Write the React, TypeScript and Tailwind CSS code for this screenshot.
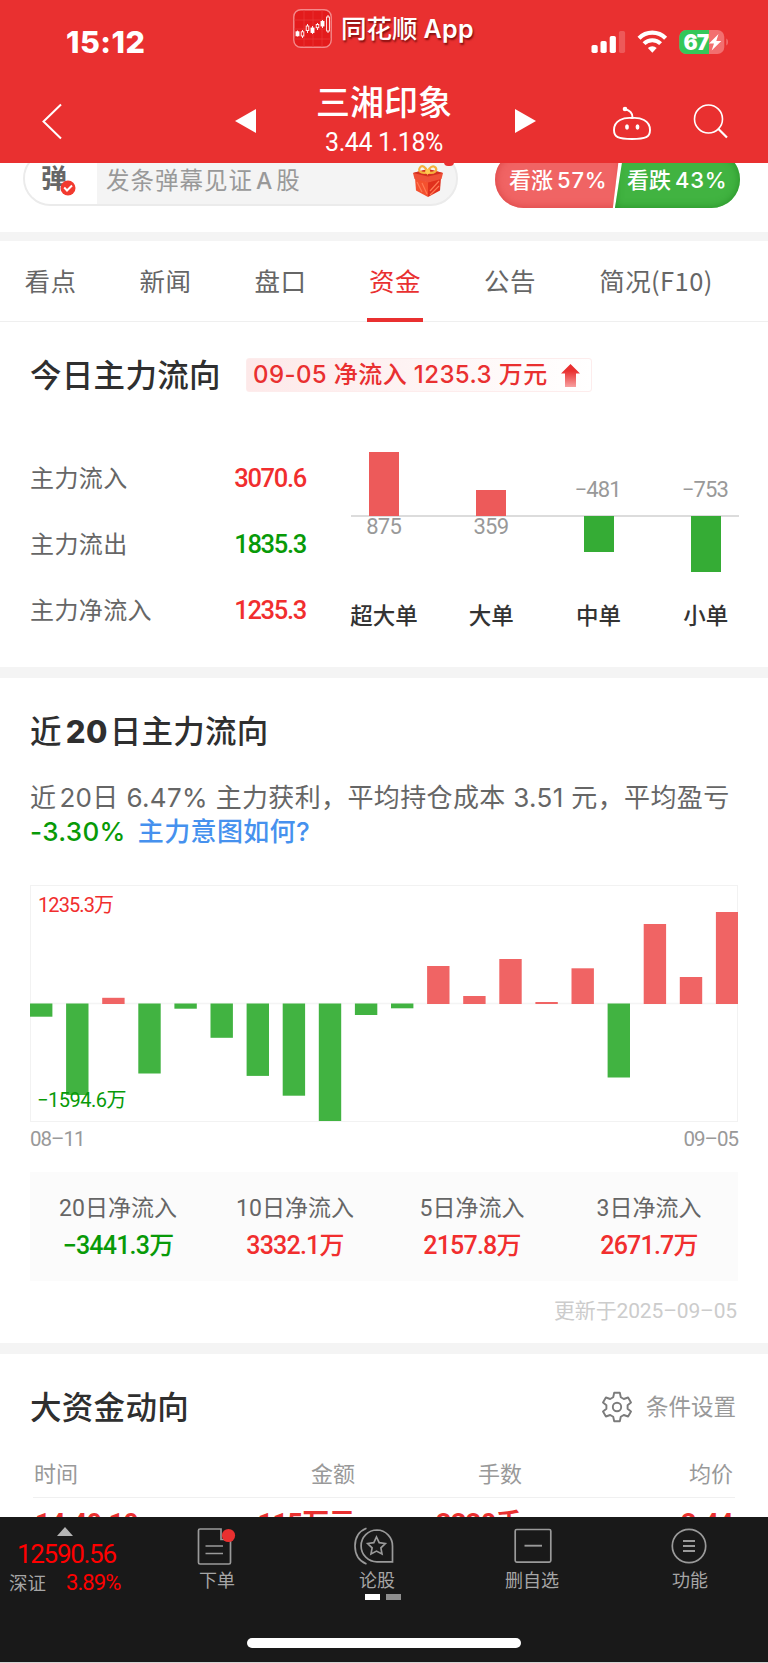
import React from 'react';

const CJK = "font-['Noto_Sans_CJK_SC',sans-serif]";
const INTER = "font-['Inter','Noto_Sans_CJK_SC',sans-serif]";
const DIN = "font-['Roboto','Noto_Sans_CJK_SC',sans-serif]";

const tabs = [
  { name: '看点', width: 'w-[101px]' },
  { name: '新闻', width: 'w-[129px]' },
  { name: '盘口', width: 'w-[101px]' },
  { name: '资金', width: 'w-[128px]' },
  { name: '公告', width: 'w-[102px]' },
  { name: '简况(F10)', width: 'w-[190px]' },
];

const flows = [
  { label: '主力流入', value: '3070.6', color: 'text-[#f12e2e]' },
  { label: '主力流出', value: '1835.3', color: 'text-[#089a08]' },
  { label: '主力净流入', value: '1235.3', color: 'text-[#f12e2e]' },
];

const orders = [
  { label: '超大单', value: '875', height: 64.5 },
  { label: '大单', value: '359', height: 26.5 },
  { label: '中单', value: '−481', height: -36 },
  { label: '小单', value: '−753', height: -56 },
];

// bar heights in px, above (+) or below (-) the zero line
const days = [-13.2, -91.5, 6.2, -70, -5.2, -34.3, -72.4, -92.2, -117.5, -11.5, -4.8, 38, 8, 45, 2, 35.7, -74, 80, 27, 92];

const stats = [
  { label: '20日净流入', value: '−3441.3万', color: 'text-[#089a08]' },
  { label: '10日净流入', value: '3332.1万', color: 'text-[#f12e2e]' },
  { label: '5日净流入', value: '2157.8万', color: 'text-[#f12e2e]' },
  { label: '3日净流入', value: '2671.7万', color: 'text-[#f12e2e]' },
];

const AppLogo = () => (
  <svg width="39" height="39" viewBox="0 0 39 39" fill="none">
    <rect x="0.8" y="0.8" width="37.4" height="37.4" rx="7" fill="#e31b1c" stroke="#f4898a" strokeWidth="1.4" />
    <path d="M11 1v37M20 1v37M29 1v37M1 11h37M1 20h37M1 30h37" stroke="#ea3a3b" strokeWidth="0.7" />
    <g stroke="#fff" strokeWidth="0.9">
      <path d="M4.5 21.5v6M9.5 21v8M14.5 15v9M19.5 17v8M24.5 14v7M29.5 11v8M35 6v18" />
      <rect x="3" y="22.8" width="3" height="4" fill="#fff" />
      <rect x="8.2" y="22.8" width="2.6" height="4.2" fill="#e31b1c" />
      <rect x="13.2" y="17" width="2.6" height="4.5" fill="#e31b1c" />
      <rect x="18" y="19" width="3" height="4.5" fill="#fff" />
      <rect x="23.2" y="15.5" width="2.6" height="3.2" fill="#e31b1c" />
      <rect x="28" y="12.5" width="3" height="4.5" fill="#fff" />
      <rect x="33.6" y="8" width="2.8" height="14" fill="#e31b1c" />
    </g>
  </svg>
);

const StatusIcons = () => (
  <svg width="140" height="28" viewBox="0 0 140 28" fill="none">
    <rect x="1.5" y="17" width="6.2" height="8" rx="1.8" fill="#fff" />
    <rect x="10.5" y="13" width="6.2" height="12" rx="1.8" fill="#fff" />
    <rect x="19.7" y="8" width="6.2" height="17" rx="1.8" fill="#fff" />
    <rect x="28.9" y="3" width="6.2" height="22" rx="1.8" fill="#fff" fillOpacity="0.2" />
    <path d="M49 10.2a18.5 18.5 0 0 1 26.6 0" stroke="#fff" strokeWidth="4.2" />
    <path d="M54 15.6a11.7 11.7 0 0 1 16.6 0" stroke="#fff" strokeWidth="4" />
    <path d="M57.9 20a6.3 6.3 0 0 1 8.8 0L62.3 24.8z" fill="#fff" />
    <rect x="89.3" y="2" width="45" height="24" rx="7" fill="#f26f6f" />
    <path d="M96.3 2H119V26H96.3a7 7 0 0 1-7-7V9a7 7 0 0 1 7-7z" fill="#34c759" />
    <path d="M136.3 10.5c2.2.8 2.2 6.2 0 7z" fill="#f26f6f" />
    <path d="M128.5 6L119 15.5h5l-2.3 7L131.3 13h-5z" fill="#fff" />
    <text x="93.5" y="21.7" fill="#fff" fontFamily="Inter" fontWeight="900" fontSize="21" letterSpacing="-0.9">67</text>
  </svg>
);

const RobotIcon = () => (
  <svg width="40" height="36" viewBox="0 0 40 36" fill="none" stroke="#fff" strokeWidth="1.9">
    <path d="M20 13C12 12.3 2 15 2 25C2 32 6 34 20 34S38 32 38 25C38 15 28 12.3 20 13z" />
    <path d="M20.500 12.500C20.500 8 18.500 5.500 13 4.300" />
    <circle cx="13" cy="4" r="2.3" fill="#fff" stroke="none" />
    <ellipse cx="15" cy="22" rx="1.9" ry="2.7" fill="#fff" stroke="none" />
    <ellipse cx="25.5" cy="22" rx="1.9" ry="2.7" fill="#fff" stroke="none" />
  </svg>
);

const GiftIcon = () => (
  <svg width="32" height="34" viewBox="0 0 32 34" fill="none">
    <path d="M3 14L16 18V33L4 26.5z" fill="#f4512f" />
    <path d="M29 14L16 18V33L28 26.5z" fill="#e0301d" />
    <path d="M1 9L16 5L31 9L29.5 15L16 18.5L2.5 15z" fill="#ef5138" />
    <path d="M1 9L16 12.5L31 9L16 5z" fill="#d32f20" />
    <path d="M5 18l5 10M10 19l5 11M27 17l-9 10M27 22l-9 9" stroke="#ff7a55" strokeWidth="1.2" />
    <path d="M15.5 8.5C8 10 6 6.5 8 3.5S14 3 15.5 8C17 3 21.5.8 23.5 3.5S23 10 15.5 8.5z" stroke="#f5b13e" strokeWidth="2.2" />
    <circle cx="15.7" cy="7.5" r="2.5" fill="#ffcb52" />
  </svg>
);

const GearIcon = () => (
  <svg width="32" height="32" viewBox="0 0 32 32" fill="none" stroke="#7b7b7b" strokeWidth="1.9" strokeLinejoin="round">
    <path d="M13.2 1.8H18.8L19.8 6.2L22.8 8L27.1 6.5L30 11.5L26.6 14.3V17.7L30 20.5L27.1 25.5L22.8 24L19.8 25.8L18.8 30.2H13.2L12.2 25.8L9.2 24L4.9 25.5L2 20.5L5.4 17.7V14.3L2 11.5L4.9 6.5L9.2 8L12.2 6.2z" />
    <circle cx="16" cy="16" r="4.2" />
  </svg>
);

const OrderIcon = () => (
  <svg width="44" height="40" viewBox="0 0 44 40" fill="none" stroke="#9a9a9a" strokeWidth="1.7">
    <path d="M28 3H7a1.5 1.5 0 0 0-1.5 1.5v32A1.5 1.5 0 0 0 7 38H36a1.5 1.5 0 0 0 1.5-1.5V13.5H28V3z" />
    <path d="M12.5 20H30M12.5 27.5H30" />
    <circle cx="35.5" cy="9.5" r="6.6" fill="#e93030" stroke="none" />
  </svg>
);

const ForumIcon = () => (
  <svg width="42" height="40" viewBox="0 0 42 40" fill="none" stroke="#9a9a9a" strokeWidth="1.7">
    <path d="M24 4A15.8 15.8 0 0 0 24 35.8H39.5V20A15.8 15.8 0 0 0 24 4z" />
    <path d="M13.5 2.2C5 5.5 2 12 2 20S5 34.5 13.5 38" />
    <path d="M23.5 11L26.2 16.6L32.3 17.5L27.9 21.8L29 28L23.5 25.1L18 28L19.1 21.8L14.7 17.5L20.8 16.6z" />
  </svg>
);

const RemoveIcon = () => (
  <svg width="38" height="36" viewBox="0 0 38 36" fill="none" stroke="#9a9a9a" strokeWidth="1.7">
    <rect x="1.2" y="1.5" width="35.6" height="32.6" rx="1.5" />
    <path d="M10.5 17.7H28" strokeWidth="1.9" />
  </svg>
);

const MenuIcon = () => (
  <svg width="36" height="36" viewBox="0 0 36 36" fill="none" stroke="#9a9a9a" strokeWidth="1.7">
    <circle cx="18" cy="18" r="16.7" />
    <path d="M12 13H24M12 18H24M12 23H24" strokeWidth="1.9" />
  </svg>
);

const SectionTitle: React.FC<{ children: React.ReactNode }> = ({ children }) => (
  <h2 className={`h-8 whitespace-nowrap text-[31.5px] leading-[26px] font-medium tracking-[0.3px] text-[#2f2f2f] ${CJK}`}>{children}</h2>
);

const Header = () => (
  <header className="h-[163px] shrink-0 bg-[#e93030] text-white">
    <div className="flex h-[74px]">
      <div className={`w-[293px] shrink-0 pt-[24px] pl-[66px] text-[30.5px] leading-[36px] font-extrabold tracking-[0.5px] ${INTER}`}>15:12</div>
      <div className="w-[48px] shrink-0 pt-[9px]"><AppLogo /></div>
      <div className={`w-[249px] pt-[7px] text-[25.5px] leading-[40px] font-medium [text-shadow:1px_2px_2px_rgba(90,0,0,0.75)] ${CJK}`}>
        同花顺<span className="ml-1.5 font-['Inter'] text-[25px] font-semibold tracking-[0.4px]">App</span>
      </div>
      <div className="pt-7"><StatusIcons /></div>
    </div>
    <div className="flex h-[89px]">
      <svg className="mt-[28px] ml-[41px]" width="22" height="39" viewBox="0 0 22 39" fill="none">
        <path d="M20 2.5L2.5 19.5L20 36.5" stroke="#fff" strokeWidth="2" />
      </svg>
      <svg className="mt-[35px] ml-[172px]" width="21" height="24" viewBox="0 0 21 24"><path d="M21 0V24L0 12z" fill="#fff" /></svg>
      <div className="w-[259px] pr-[3px] text-center">
        <h1 className={`h-[50px] pt-[4px] text-[34px] leading-[45px] font-medium ${CJK}`}>三湘印象</h1>
        <p className={`text-[25px] leading-[38px] tracking-[-0.4px] ${DIN}`}>3.44 1.18%</p>
      </div>
      <svg className="mt-[35px]" width="21" height="24" viewBox="0 0 21 24"><path d="M0 0V24L21 12z" fill="#fff" /></svg>
      <div className="mt-[31px] ml-[76px]"><RobotIcon /></div>
      <svg className="mt-[29px] ml-[40px]" width="36" height="36" viewBox="0 0 36 36" fill="none" stroke="#fff" strokeWidth="1.6">
        <circle cx="16.5" cy="16" r="14" />
        <path d="M26 25.5L35 34.5" strokeWidth="2.2" />
      </svg>
    </div>
  </header>
);

const DanmuBar = () => (
  <div className="flex h-[69px] shrink-0 overflow-hidden">
    <div className="relative -mt-[12px] ml-[23px] flex h-[55px] w-[435px] overflow-hidden rounded-full border-2 border-[#ebebeb] bg-[#f4f4f4]">
      <div className={`w-[72px] bg-white pt-[9px] pl-[16px] text-[26px] leading-[30px] font-bold text-[#666] ${CJK}`}>弹</div>
      <svg className="absolute top-[27px] left-[35px]" width="16" height="16" viewBox="0 0 16 16" fill="none">
        <circle cx="8" cy="8" r="7.5" fill="#f23a2f" />
        <path d="M4.2 7.5L7 10.5L12 5.5" stroke="#fff" strokeWidth="2" />
      </svg>
      <div className={`w-[315px] pt-[10px] pl-[9px] text-[23.5px] leading-[32px] tracking-[1px] text-[#999] ${CJK}`}>
        发条弹幕见证<span className="mx-[3px] font-['Inter'] text-[23px] font-medium">A</span>股
      </div>
      <div className="pt-[11px]"><GiftIcon /></div>
    </div>
    {/* sliver of the badge on the gift, tucked under the header */}
    <span className="-mt-[5px] -ml-[14px] h-[8px] w-[10px] rounded-full bg-[#e93030] z-10" />
    <div className="-mt-[12px] ml-[41px] h-[57px] w-[126px]">
      <div className={`h-[57px] rounded-l-full bg-[#f06464] pl-[14px] text-[22px] leading-[54px] font-medium text-white shadow-[inset_0_0_8px_#d94343] [clip-path:polygon(0_0,99%_0,93.5%_100%,0_100%)] ${CJK}`}>
        看涨<span className="ml-1 font-['Inter'] tracking-[0.8px]">57%</span>
      </div>
    </div>
    <div className="-mt-[12px] -ml-[6px] h-[57px] w-[125px]">
      <div className={`h-[57px] rounded-r-full bg-[#41b341] pl-[12px] text-[22px] leading-[54px] font-medium text-white shadow-[inset_0_0_8px_#269026] [clip-path:polygon(7%_0,100%_0,100%_100%,0_100%)] ${CJK}`}>
        看跌<span className="ml-1 font-['Inter'] tracking-[0.8px]">43%</span>
      </div>
    </div>
  </div>
);

const Tabs = () => (
  <nav className="flex h-[81px] shrink-0 border-b border-[#efefef]">
    {tabs.map((tab) => (
      <div key={tab.name} className={`flex flex-col items-center justify-between text-[25.5px] ${CJK} ${tab.width} ${tab.name === '资金' ? 'text-[#e93030]' : 'text-[#666]'}`}>
        <span className="pt-[19px] leading-[40px] tracking-[0.4px]">{tab.name}</span>
        {tab.name === '资金' && <span className="-mb-px h-1 w-14 bg-[#e93030]" />}
      </div>
    ))}
  </nav>
);

const TodayFlow = () => (
  <section className="h-[345px] shrink-0">
    <div className="flex pt-[36px] pl-[30px]">
      <div className="w-[216px] pt-[2px]"><SectionTitle>今日主力流向</SectionTitle></div>
      <div className={`flex h-[34px] w-[346px] items-center rounded-[3px] border border-[#fdecec] bg-linear-to-r from-[#fde9e9] to-white pl-[6px] text-[24px] font-medium whitespace-nowrap text-[#e93030] ${INTER}`}>
        <span className="leading-[30px] tracking-[0.4px]">09-05 净流入 1235.3 万元</span>
        <svg className="ml-[13px]" width="19" height="23" viewBox="0 0 19 23">
          <defs>
            <linearGradient id="up" x1="0" y1="0" x2="0" y2="1">
              <stop offset="0.3" stopColor="#e93030" />
              <stop offset="1" stopColor="#f7a0a0" />
            </linearGradient>
          </defs>
          <path d="M9.5 0L19 9.5H15V23H4V9.5H0z" fill="url(#up)" />
        </svg>
      </div>
    </div>
    <div className="flex">
      <div className="ml-[30px] w-[276px] pt-[53px]">
        {flows.map((row) => (
          <div key={row.label} className="flex h-[66px] items-center justify-between whitespace-nowrap">
            <span className={`-mt-0.5 text-[24px] leading-8 tracking-[0.4px] text-[#666] ${CJK}`}>{row.label}</span>
            <span className={`text-[25.5px] leading-8 font-medium tracking-[-1.3px] ${row.color} ${DIN}`}>{row.value}</span>
          </div>
        ))}
      </div>
      <div className="ml-[45px] w-[388px] pt-[56px]">
        <div className="relative h-[150px]">
          <div className="absolute top-[67px] h-[2px] w-full bg-[#dcdcdc]" />
          <div className="relative -mx-[20.5px] grid grid-cols-4">
            {orders.map((bar) => (
              <div key={bar.label} className={`flex flex-col items-center text-[22px] leading-5 tracking-[-0.8px] text-[#999] ${DIN}`}>
                {bar.height > 0 ? (
                  <>
                    <div className="flex h-[68px] items-end">
                      <div className="w-[30px] bg-[#ed5a5a]" style={{ height: bar.height }} />
                    </div>
                    <span className="pt-px pr-px">{bar.value}</span>
                  </>
                ) : (
                  <>
                    <span className="h-[68px] pt-[32px] pr-[2px]">{bar.value}</span>
                    <div className="w-[30px] bg-[#35ac35]" style={{ height: -bar.height }} />
                  </>
                )}
              </div>
            ))}
          </div>
        </div>
        <div className={`-mx-[20.5px] grid grid-cols-4 text-center text-[22.5px] leading-8 font-medium whitespace-nowrap text-[#333] ${CJK}`}>
          {orders.map((bar) => <span key={bar.label}>{bar.label}</span>)}
        </div>
      </div>
    </div>
  </section>
);

const MonthFlow = () => (
  <section className="h-[665px] shrink-0 px-[30px] pt-[38px]">
    <SectionTitle>近<span className="mr-[2px] ml-[4px] font-['Inter'] text-[31px] font-extrabold">20</span>日主力流向</SectionTitle>
    <div className={`mt-[33px] text-[26px] leading-[34px] tracking-[0.36px] whitespace-nowrap text-[#666] ${INTER}`}>
      <p className="h-[34px]">近<span className="ml-[3px]">20日</span> 6.47% 主力获利，平均持仓成本 3.51 元，平均盈亏</p>
      <p className="h-[34px] font-medium">
        <span className="text-[#089a08]">-3.30%</span>
        <span className="ml-[12px] text-[#4691ee]">主力意图如何?</span>
      </p>
    </div>
    <div className="relative mt-[36px] h-[237px] w-[708px] border border-[#f2f2f2]">
      <svg className="absolute -top-px -left-px" width="708" height="237" viewBox="0 0 708 237">
        <path d="M0 118.5H708" stroke="#f4f4f4" strokeWidth="1.5" />
        {days.map((h, i) => (
          <rect key={i} x={i * 36.1} y={h > 0 ? 119 - h : 118.5} width="22.4" height={Math.abs(h)} fill={h > 0 ? '#f06464' : '#41b341'} />
        ))}
      </svg>
      <span className={`absolute top-[7px] left-[7px] text-[20px] leading-6 tracking-[-0.9px] text-[#f12e2e] ${DIN}`}>1235.3万</span>
      <span className={`absolute top-[202px] left-[6px] text-[20px] leading-6 tracking-[-0.5px] text-[#089a08] ${DIN}`}>−1594.6万</span>
    </div>
    <div className={`flex h-[50px] justify-between pt-[4px] text-[20.5px] leading-[26px] tracking-[-1px] text-[#999] ${DIN}`}>
      <span>08–11</span>
      <span>09–05</span>
    </div>
    <div className={`grid h-[109px] grid-cols-4 bg-[#fbfbfb] pt-[21px] text-center whitespace-nowrap ${DIN}`}>
      {stats.map((s) => (
        <div key={s.label} className="pr-px">
          <p className="h-[35px] text-[23px] leading-8 text-[#666]">{s.label}</p>
          <p className={`text-[25px] leading-[35px] font-medium tracking-[-0.8px] ${s.color}`}>{s.value}</p>
        </div>
      ))}
    </div>
    <p className={`pt-[14px] pr-px text-right text-[21px] leading-8 tracking-[-0.15px] text-[#ccc] ${DIN}`}>更新于2025–09–05</p>
  </section>
);

const BigMoney = () => (
  <section className="h-[163px] shrink-0 overflow-hidden">
    <div className="flex h-[99px] justify-between pt-[38px] pr-[32px] pl-[30px]">
      <SectionTitle>大资金动向</SectionTitle>
      <div className="-mt-px flex h-8 items-center">
        <GearIcon />
        <span className={`-mt-[4px] ml-[13px] text-[22.5px] leading-7 text-[#999] ${CJK}`}>条件设置</span>
      </div>
    </div>
    <div className={`mx-[33px] grid h-[45px] grid-cols-[122px_200px_167px_211px] border-b border-[#f0f0f0] text-right text-[22px] leading-[39px] text-[#999] ${CJK}`}>
      <span className="pl-px text-left">时间</span>
      <span>金额</span>
      <span>手数</span>
      <span>均价</span>
    </div>
    <div className={`mx-[33px] grid grid-cols-[122px_200px_167px_211px] pt-[8px] text-right text-[27px] leading-[36px] font-bold tracking-[-0.6px] whitespace-nowrap text-[#e93030] ${DIN}`}>
      <span className="pl-[2px] text-left">14:49:19</span>
      <span>115万元</span>
      <span>3330手</span>
      <span>3.44</span>
    </div>
  </section>
);

const NavItem: React.FC<{ label: string; className: string; icon: React.ReactNode; children?: React.ReactNode }> = ({ label, className, icon, children }) => (
  <div className={`flex shrink-0 flex-col items-center text-[18px] leading-6 text-[#a6a6a6] ${CJK} ${className}`}>
    <div className="flex h-[58px] items-center">{icon}</div>
    <span className="-mt-2">{label}</span>
    {children}
  </div>
);

const BottomBar = () => (
  <footer className="flex h-[145px] shrink-0 flex-col bg-[#191919]">
    <div className="flex h-[121px]">
      <div className="w-[130px] shrink-0">
        <svg className="mt-[10px] ml-[57px]" width="16" height="9" viewBox="0 0 16 9"><path d="M8 0L16 9H0z" fill="#b5b5b5" /></svg>
        <p className={`mt-[3px] pl-[17px] text-[26px] leading-[30px] tracking-[-1.3px] text-[#f00] ${DIN}`}>12590.56</p>
        <div className="flex whitespace-nowrap">
          <span className={`w-[57px] pl-[9px] text-[18.5px] leading-[26px] text-[#a6a6a6] ${CJK}`}>深证</span>
          <span className={`pl-[9px] text-[22px] leading-[27px] tracking-[-0.9px] text-[#f00] ${DIN}`}>3.89%</span>
        </div>
      </div>
      <NavItem label="下单" className="w-[174px]" icon={<div className="mr-[4px]"><OrderIcon /></div>} />
      <NavItem label="论股" className="w-[146px]" icon={<div className="mr-[6px]"><ForumIcon /></div>}>
        <div className="mt-[3px] ml-[12px] flex gap-[6px]">
          <span className="h-[6px] w-[15px] bg-white" />
          <span className="h-[6px] w-[15px] bg-[#8f8f8f]" />
        </div>
      </NavItem>
      <NavItem label="删自选" className="w-[164px]" icon={<div className="ml-[2px]"><RemoveIcon /></div>} />
      <NavItem label="功能" className="w-[152px]" icon={<div className="mr-[2px]"><MenuIcon /></div>} />
    </div>
    <div className="mx-auto h-[10px] w-[274px] rounded-full bg-white" />
  </footer>
);

const App: React.FC = () => (
  <div className="flex h-[1663px] w-[768px] flex-col overflow-hidden border-b border-[#d4d4d4] bg-white">
    <Header />
    <DanmuBar />
    <div className="h-[9px] shrink-0 bg-[#f4f4f4]" />
    <Tabs />
    <TodayFlow />
    <div className="h-[11px] shrink-0 bg-[#f4f4f4]" />
    <MonthFlow />
    <div className="h-[11px] shrink-0 bg-[#f4f4f4]" />
    <BigMoney />
    <BottomBar />
  </div>
);

export default App;
